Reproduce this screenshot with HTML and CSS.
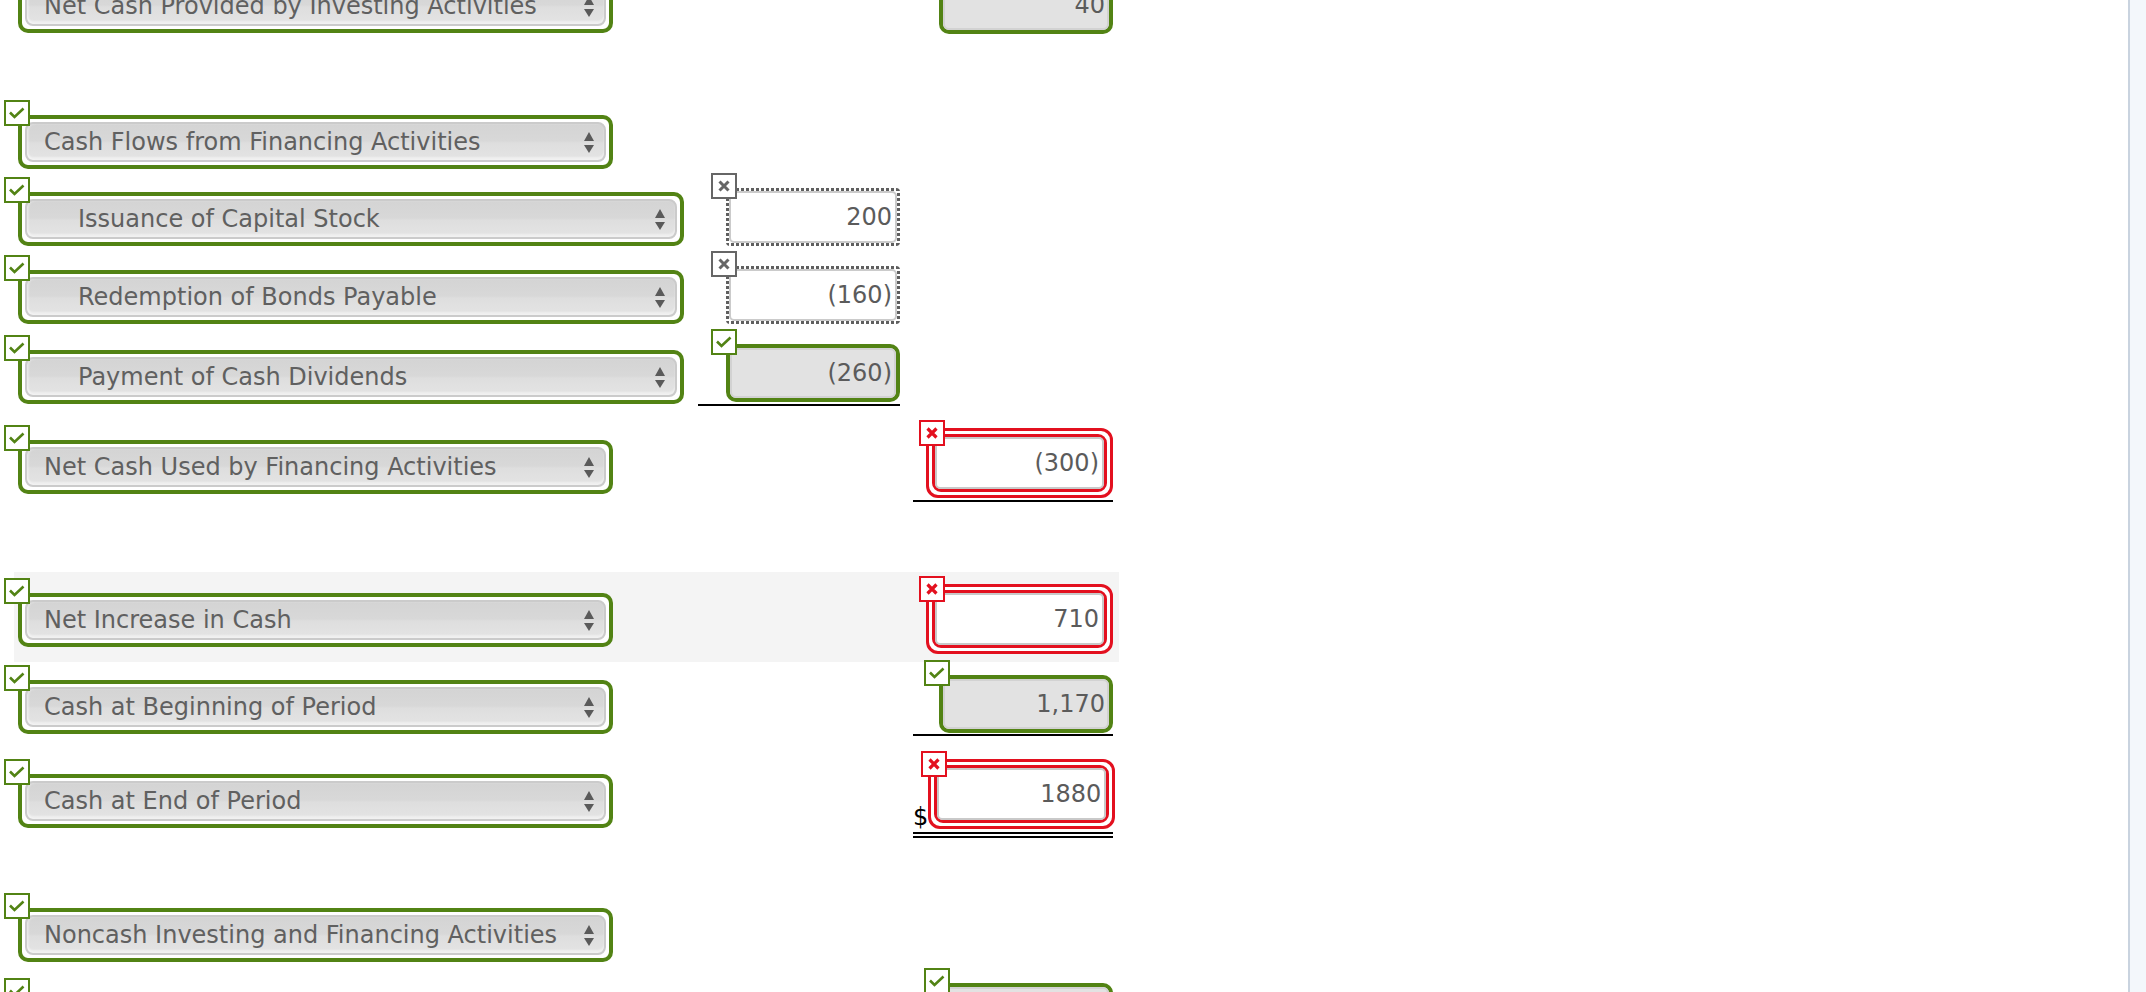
FILE: index.html
```html
<!DOCTYPE html>
<html lang="en">
<head>
<meta charset="utf-8">
<title>Statement of Cash Flows</title>
<link rel="stylesheet" href="styles.css">
</head>
<body>
<svg class="defs" width="0" height="0" aria-hidden="true">
  <symbol id="chk" viewBox="0 0 26 26">
    <rect x="1" y="1" width="24" height="24" fill="#fff" stroke="#528314" stroke-width="2"/>
    <path d="M6 12.5 L10.5 17 L19.5 8.5" fill="none" stroke="#528314" stroke-width="2.6"/>
  </symbol>
  <symbol id="xg" viewBox="0 0 26 26">
    <rect x="1" y="1" width="24" height="24" fill="#fff" stroke="#666" stroke-width="2"/>
    <path d="M8.5 8.5 L17.5 17.5 M17.5 8.5 L8.5 17.5" fill="none" stroke="#666" stroke-width="3"/>
  </symbol>
  <symbol id="xr" viewBox="0 0 26 26">
    <rect x="1" y="1" width="24" height="24" fill="#fff" stroke="#e3101f" stroke-width="2"/>
    <path d="M8.5 8.5 L17.5 17.5 M17.5 8.5 L8.5 17.5" fill="none" stroke="#e3101f" stroke-width="3.2"/>
  </symbol>
  <symbol id="arr" viewBox="0 0 10 21">
    <path d="M0 9 L5 0 L10 9Z M0 13 L10 13 L5 21Z" fill="#5a5a5a"/>
  </symbol>
</svg>

<main class="page">
  <!-- Net Cash Provided by Investing Activities -->
  <div class="row sp-top">
    <div class="c1">
      <div class="fld mb1">
        <div class="pick n"><div class="sel"><span class="lbl">Net Cash Provided by Investing Activities</span><svg class="arr"><use href="#arr"/></svg></div></div>
        <svg class="ico l"><use href="#chk"/></svg>
      </div>
    </div>
    <div class="c2"></div>
    <div class="c3">
      <div class="fld">
        <div class="ginp"><div class="in">40</div></div>
        <svg class="ico m"><use href="#chk"/></svg>
      </div>
    </div>
  </div>

  <!-- Cash Flows from Financing Activities -->
  <div class="row sp81">
    <div class="c1">
      <div class="fld">
        <div class="pick n"><div class="sel"><span class="lbl">Cash Flows from Financing Activities</span><svg class="arr"><use href="#arr"/></svg></div></div>
        <svg class="ico l"><use href="#chk"/></svg>
      </div>
    </div>
    <div class="c2"></div>
    <div class="c3"></div>
  </div>

  <!-- Issuance of Capital Stock -->
  <div class="row sp19">
    <div class="c1">
      <div class="fld">
        <div class="pick w"><div class="sel ind"><span class="lbl">Issuance of Capital Stock</span><svg class="arr"><use href="#arr"/></svg></div></div>
        <svg class="ico l"><use href="#chk"/></svg>
      </div>
    </div>
    <div class="c2">
      <div class="fld">
        <div class="dot"><div class="in">200</div></div>
        <svg class="ico m"><use href="#xg"/></svg>
      </div>
    </div>
    <div class="c3"></div>
  </div>

  <!-- Redemption of Bonds Payable -->
  <div class="row sp20">
    <div class="c1">
      <div class="fld">
        <div class="pick w"><div class="sel ind"><span class="lbl">Redemption of Bonds Payable</span><svg class="arr"><use href="#arr"/></svg></div></div>
        <svg class="ico l"><use href="#chk"/></svg>
      </div>
    </div>
    <div class="c2">
      <div class="fld">
        <div class="dot"><div class="in">(160)</div></div>
        <svg class="ico m"><use href="#xg"/></svg>
      </div>
    </div>
    <div class="c3"></div>
  </div>

  <!-- Payment of Cash Dividends -->
  <div class="row sp20">
    <div class="c1">
      <div class="fld mb2">
        <div class="pick w"><div class="sel ind"><span class="lbl">Payment of Cash Dividends</span><svg class="arr"><use href="#arr"/></svg></div></div>
        <svg class="ico l"><use href="#chk"/></svg>
      </div>
    </div>
    <div class="c2 ul pb2">
      <div class="fld">
        <div class="ginp"><div class="in">(260)</div></div>
        <svg class="ico m"><use href="#chk"/></svg>
      </div>
    </div>
    <div class="c3"></div>
  </div>

  <!-- Net Cash Used by Financing Activities -->
  <div class="row sp22">
    <div class="c1">
      <div class="fld mb8">
        <div class="pick n"><div class="sel"><span class="lbl">Net Cash Used by Financing Activities</span><svg class="arr"><use href="#arr"/></svg></div></div>
        <svg class="ico l"><use href="#chk"/></svg>
      </div>
    </div>
    <div class="c2"></div>
    <div class="c3 ul pb2">
      <div class="fld">
        <div class="rbox"><div class="ring"><div class="in">(300)</div></div></div>
        <svg class="ico r"><use href="#xr"/></svg>
      </div>
    </div>
  </div>

  <!-- Net Increase in Cash -->
  <div class="row band sp70">
    <div class="c1">
      <div class="fld mb7">
        <div class="pick n"><div class="sel"><span class="lbl">Net Increase in Cash</span><svg class="arr"><use href="#arr"/></svg></div></div>
        <svg class="ico l"><use href="#chk"/></svg>
      </div>
    </div>
    <div class="c2"></div>
    <div class="c3">
      <div class="fld">
        <div class="rbox"><div class="ring"><div class="in">710</div></div></div>
        <svg class="ico r"><use href="#xr"/></svg>
      </div>
    </div>
  </div>

  <!-- Cash at Beginning of Period -->
  <div class="row sp13">
    <div class="c1">
      <div class="fld mb2">
        <div class="pick n"><div class="sel"><span class="lbl">Cash at Beginning of Period</span><svg class="arr"><use href="#arr"/></svg></div></div>
        <svg class="ico l"><use href="#chk"/></svg>
      </div>
    </div>
    <div class="c2"></div>
    <div class="c3 ul pb1">
      <div class="fld">
        <div class="ginp"><div class="in">1,170</div></div>
        <svg class="ico m"><use href="#chk"/></svg>
      </div>
    </div>
  </div>

  <!-- Cash at End of Period -->
  <div class="row sp23">
    <div class="c1">
      <div class="fld mb10">
        <div class="pick n"><div class="sel"><span class="lbl">Cash at End of Period</span><svg class="arr"><use href="#arr"/></svg></div></div>
        <svg class="ico l"><use href="#chk"/></svg>
      </div>
    </div>
    <div class="c2"></div>
    <div class="c3 cash dbl">
      <span class="dollar">$</span>
      <div class="fld">
        <div class="rbox"><div class="ring"><div class="in">1880</div></div></div>
        <svg class="ico r"><use href="#xr"/></svg>
      </div>
    </div>
  </div>

  <!-- Noncash Investing and Financing Activities -->
  <div class="row sp70">
    <div class="c1">
      <div class="fld">
        <div class="pick n"><div class="sel"><span class="lbl">Noncash Investing and Financing Activities</span><svg class="arr"><use href="#arr"/></svg></div></div>
        <svg class="ico l"><use href="#chk"/></svg>
      </div>
    </div>
    <div class="c2"></div>
    <div class="c3"></div>
  </div>

  <!-- next row (below the fold) -->
  <div class="row sp21">
    <div class="c1">
      <div class="fld mbneg">
        <div class="pick w"><div class="sel ind"><span class="lbl">Issuance of Common Stock for Land</span><svg class="arr"><use href="#arr"/></svg></div></div>
        <svg class="ico l"><use href="#chk"/></svg>
      </div>
    </div>
    <div class="c2"></div>
    <div class="c3">
      <div class="fld">
        <div class="ginp"><div class="in">0</div></div>
        <svg class="ico m"><use href="#chk"/></svg>
      </div>
    </div>
  </div>
</main>
<aside class="rail"></aside>
</body>
</html>
```

FILE: styles.css
```css
* { box-sizing: border-box; }

html, body {
  margin: 0;
  padding: 0;
  height: 992px;
  overflow: hidden;
  background: #fff;
}

body {
  display: flex;
  font-family: "DejaVu Sans", Verdana, sans-serif;
  font-size: 24px;
  color: #5e5e5e;
}

.defs { position: absolute; width: 0; height: 0; overflow: hidden; }

.page {
  flex: 1;
  padding-left: 14px;
  overflow: hidden;
}

.rail {
  width: 18px;
  flex: none;
  border-left: 2px solid #c9d3df;
  background: #f3f7fb;
}

/* rows */
.row {
  display: flex;
  align-items: flex-end;
  width: 1105px;
  padding: 0 6px 0 4px;
}

.band {
  background: #f4f4f4;
  padding-top: 12px;
  padding-bottom: 8px;
}

.sp-top { margin-top: -24px; }
.sp81 { margin-top: 81px; }
.sp19 { margin-top: 19px; }
.sp20 { margin-top: 20px; }
.sp22 { margin-top: 22px; }
.sp70 { margin-top: 70px; }
.sp13 { margin-top: 13px; }
.sp23 { margin-top: 23px; }
.sp21 { margin-top: 21px; }

.c1 {
  width: 680px;
  display: flex;
  align-items: flex-end;
}

.c2 {
  width: 202px;
  display: flex;
  justify-content: flex-end;
  align-items: flex-end;
}

.c3 {
  width: 200px;
  margin-left: 13px;
  display: flex;
  justify-content: flex-end;
  align-items: flex-end;
}

.c3.cash { justify-content: space-between; }

.ul { border-bottom: 2px solid #000; }
.pb1 { padding-bottom: 1px; }
.pb2 { padding-bottom: 2px; }
.dbl { border-bottom: 6px double #000; padding-bottom: 3px; }

.mb1 { margin-bottom: 1px; }
.mb2 { margin-bottom: 2px; }
.mb7 { margin-bottom: 7px; }
.mb8 { margin-bottom: 8px; }
.mb10 { margin-bottom: 10px; }
.mbneg { margin-bottom: -6px; }

/* field wrapper with status badge */
.fld { position: relative; }

.ico {
  position: absolute;
  width: 26px;
  height: 26px;
  z-index: 2;
}
.ico.l { left: -14px; top: -15px; }
.ico.m { left: -15px; top: -15px; }
.ico.r { left: -7px; top: -8px; }

/* dropdown inside green frame */
.pick {
  border: 4px solid #528314;
  border-radius: 10px;
  padding: 3px;
  background: #fff;
}
.pick.n { width: 595px; }
.pick.w { width: 666px; }

.sel {
  display: flex;
  align-items: center;
  height: 40px;
  padding: 0 10px 0 17px;
  border: 2px solid #cbcbcb;
  border-radius: 8px;
  background: linear-gradient(to bottom, #d4d4d4 0%, #d8d8d8 47%, #dedede 53%, #e4e4e4 100%);
  box-shadow: inset 0 -3px 2px rgba(255, 255, 255, 0.45), inset 2px 0 2px rgba(255, 255, 255, 0.35);
  color: #606060;
}
.sel.ind { padding-left: 51px; }

.lbl {
  flex: 1;
  white-space: nowrap;
  overflow: hidden;
}

.arr {
  width: 10px;
  height: 21px;
  flex: none;
}

/* numeric inputs */
.in {
  height: 100%;
  display: flex;
  align-items: center;
  justify-content: flex-end;
  color: #5b5b5b;
  white-space: nowrap;
}

/* square-dotted frame, drawn with repeating gradients on each side */
.dot {
  width: 174px;
  height: 58px;
  padding: 3px;
  border-radius: 4px;
  background:
    linear-gradient(to right, #5f5f5f 3px, transparent 3px) top left / 5px 3px repeat-x,
    linear-gradient(to right, #5f5f5f 3px, transparent 3px) bottom left / 5px 3px repeat-x,
    linear-gradient(to bottom, #5f5f5f 3px, transparent 3px) top left / 3px 5px repeat-y,
    linear-gradient(to bottom, #5f5f5f 3px, transparent 3px) top right / 3px 5px repeat-y,
    #fff;
}
.dot .in {
  border: 2px solid #cbcbcb;
  border-radius: 5px;
  padding-right: 3px;
  background: #fff;
}

.ginp {
  width: 174px;
  height: 58px;
  border: 4px solid #528314;
  border-radius: 10px;
  background: #e2e2e2;
}
.ginp .in {
  border: 2px solid #d2d2d2;
  border-radius: 6px;
  padding-right: 2px;
}

.rbox {
  width: 187px;
  height: 70px;
  border: 3px solid #e3101f;
  border-radius: 12px;
  padding: 3px;
  background: #fff;
}
.rbox .ring {
  height: 100%;
  border: 3px solid #e3101f;
  border-radius: 9px;
}
.rbox .in {
  border: 2px solid #c9c9c9;
  border-radius: 5px;
  padding-right: 3px;
  background: #fff;
}

.dollar {
  color: #000;
  font-size: 24px;
  line-height: 24px;
}
```
